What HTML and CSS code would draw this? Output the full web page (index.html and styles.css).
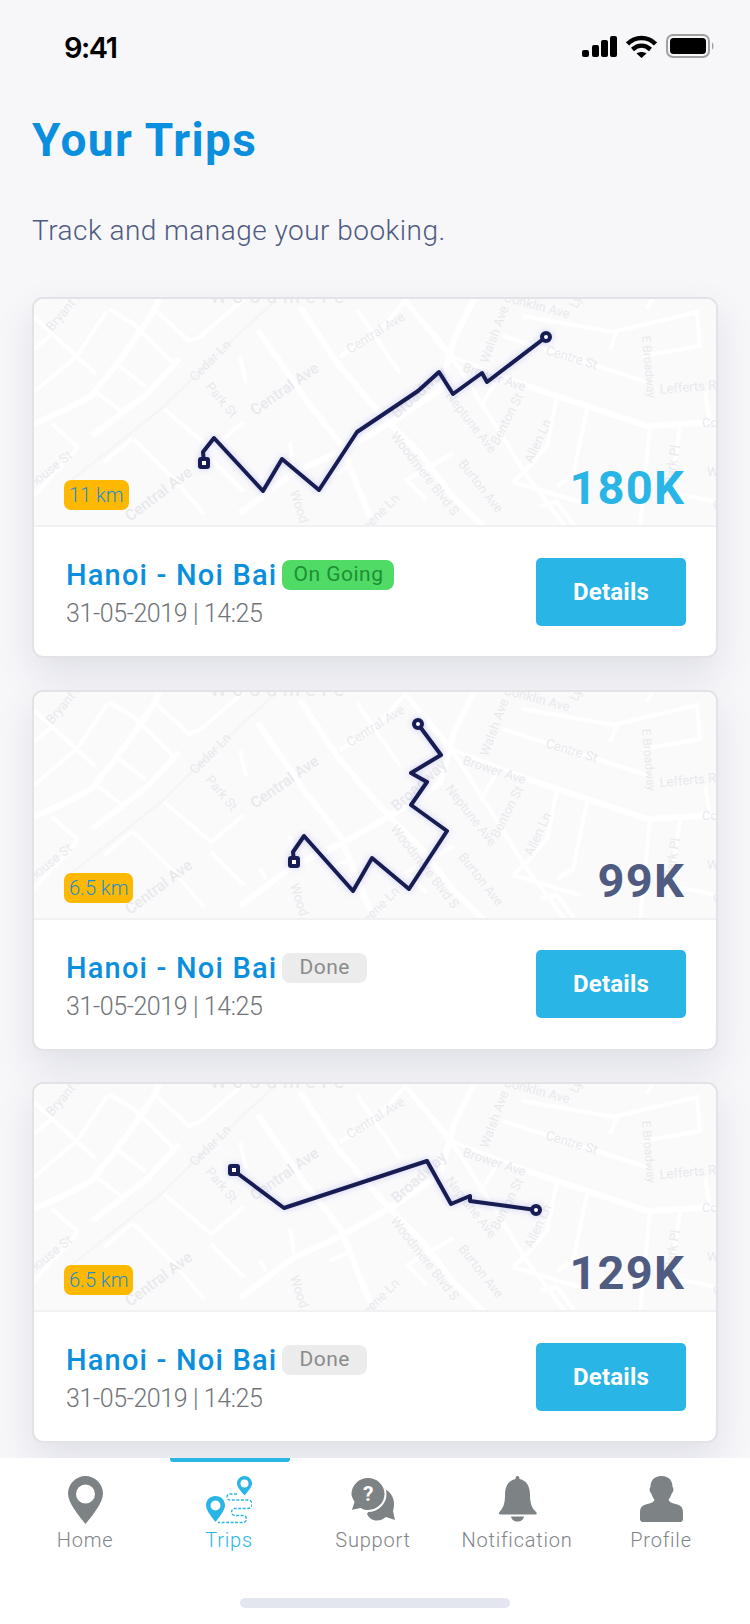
FILE: index.html
```html
<!DOCTYPE html>
<html lang="en">
<head>
  <meta charset="UTF-8">
  <meta name="viewport" content="width=device-width, initial-scale=1.0">
  <title>Your Trips</title>
  <link rel="stylesheet" href="styles.css">
</head>
<body>
  <!-- map drawing shared by the three cards -->
  <svg class="defs" width="0" height="0">
    <symbol id="streets" viewBox="0 0 682 226">
      <g class="road">
        <path d="M0 18L43 58L62 75"/>
        <path d="M18 35L0 50"/>
        <path d="M73 12L43 57L0 93"/>
        <path class="wide" d="M0 125L33 110L57 97L83 65L103 37L120 12L125 0"/>
        <path d="M75 10L100 25L140 65"/>
        <path d="M83 65L112 88"/>
        <path d="M62 93L87 112"/>
        <path class="wide" d="M58 137L113 95L145 60"/>
        <path d="M18 125L43 147L41 152L0 197"/>
        <path d="M98 140L70 163"/>
        <path d="M100 140L140 180L170 215"/>
        <path d="M130 110L177 150L210 123"/>
        <path d="M177 160L210 193"/>
        <path d="M118 8L155 42L167 37L210 0"/>
        <path class="wide" d="M206 214L259 174L309 151L366 118L406 91L420 40L440 0"/>
        <path class="wide" d="M224 31L272 101L306 144L336 218"/>
        <path class="wide" d="M266 8L303 64L343 111L389 158L419 198L473 250"/>
        <path d="M323 11L366 74"/>
        <path d="M306 58L346 31L373 0"/>
        <path d="M370 0L420 58"/>
        <path d="M419 58L506 91"/>
        <path d="M463 81L446 108"/>
        <path d="M419 154L373 181L393 201"/>
        <path d="M256 144L260 170M206 58L212 84M226 177L232 187M296 177L313 169"/>
        <path d="M369 0L426 70L493 177L533 230"/>
        <path class="wide" d="M493 87L613 127L683 123"/>
        <path d="M523 97L513 147L493 170L479 183"/>
        <path d="M553 110L539 177L523 187"/>
        <path d="M616 127L609 197L606 230"/>
        <path d="M646 127L639 177"/>
        <path d="M489 17L579 33L663 13L666 47L609 57"/>
        <path d="M583 33L576 50"/>
        <path d="M469 37L613 83"/>
        <path d="M479 183L546 203M506 207L523 203L543 230M633 193L683 203"/>
        <path d="M618 0L613 10M671 93L676 123"/>
      </g>
      <path class="rail" d="M30 187L127 110L210 30L240 3"/>
      <g class="label">
        <text class="spaced" x="176" y="4">Woodmere</text>
        <text transform="translate(18 33) rotate(-50)">Bryant St</text>
        <text transform="translate(161 83) rotate(-45)">Cedar Ln</text>
        <text transform="translate(171 88) rotate(50)">Park St</text>
        <text class="major" transform="translate(221 117) rotate(-35)">Central Ave</text>
        <text transform="translate(316 55) rotate(-32)">Central Ave</text>
        <text class="major" transform="translate(96 223) rotate(-37)">Central Ave</text>
        <text class="end" transform="translate(39 158) rotate(-38)">Townhouse St</text>
        <text transform="translate(256 193) rotate(72)">Wood Rd</text>
        <text class="major" transform="translate(363 120) rotate(-42)">Broadway</text>
        <text transform="translate(469 2) rotate(15)">Conklin Ave</text>
        <text transform="translate(543 10) rotate(-65)">Ly</text>
        <text transform="translate(454 65) rotate(-70)">Walsh Ave</text>
        <text transform="translate(428 72) rotate(18)">Brower Ave</text>
        <text transform="translate(511 55) rotate(17)">Centre St</text>
        <text class="small" transform="translate(608 37) rotate(85)">E Broadway</text>
        <text transform="translate(626 95) rotate(-5)">Lefferts Rd</text>
        <text transform="translate(668 128)">Cole St</text>
        <text transform="translate(411 97) rotate(52)">Neptune Ave</text>
        <text transform="translate(464 147) rotate(-63)">Benton St</text>
        <text transform="translate(498 165) rotate(-65)">Allen Ln</text>
        <text transform="translate(356 137) rotate(52)">Woodmere Blvd S</text>
        <text transform="translate(424 165) rotate(52)">Burton Ave</text>
        <text class="end" transform="translate(366 200) rotate(-45)">Greene Ln</text>
        <text transform="translate(639 187) rotate(-80)">Park Pl</text>
        <text transform="translate(673 177)">Willow</text>
        <text transform="translate(679 210)">Co</text>
      </g>
    </symbol>
  </svg>

  <div class="screen">
    <header class="status-bar">
      <span class="clock">9:41</span>
      <div class="status-icons">
        <svg width="35" height="21" viewBox="0 0 35 21"><rect x="0" y="14" width="7" height="7" rx="2"/><rect x="10" y="9" width="7" height="12" rx="2"/><rect x="19" y="4" width="7" height="17" rx="2"/><rect x="28" y="0" width="7" height="21" rx="2"/></svg>
        <svg width="31" height="23" viewBox="0 0 31 23"><path class="wifi" d="M1.500 9C9 1 22 1 29.500 9"/><path class="wifi" d="M6.500 14.500C12 9.500 19 9.500 24.500 14.500"/><path d="M10.500 18.500C13.500 16.500 17.500 16.500 20.500 18.500L15.500 23Z"/></svg>
        <svg width="49" height="24" viewBox="0 0 49 24"><rect class="battery-case" x="1" y="1" width="42" height="22" rx="6"/><rect x="4" y="4" width="36" height="16" rx="3.500"/><path class="battery-tip" d="M46 8.500C48 9.500 48 14.500 46 15.500Z"/></svg>
      </div>
    </header>

    <main class="content">
      <h1 class="page-title">Your Trips</h1>
      <p class="page-sub">Track and manage your booking.</p>

      <article class="trip-card">
        <div class="map">
          <svg class="map-art"><use href="#streets"/></svg>
          <svg class="route" viewBox="0 0 682 226">
            <path class="route-line" d="M170 164L169 153L180 139L229 192L248 160L285 191L323 133L384 92L405 73L419 95L448 74L453 83L512 38"/>
            <rect class="route-dot" x="166" y="160" width="8" height="8" rx="1"/>
            <circle class="route-dot" cx="512" cy="38" r="4"/>
          </svg>
          <div class="map-foot">
            <span class="distance">11 km</span>
            <span class="price price-live">180K</span>
          </div>
        </div>
        <div class="trip-info">
          <div class="trip-text">
            <div class="trip-head">
              <h2 class="trip-name">Hanoi - Noi Bai</h2>
              <span class="tag tag-live">On Going</span>
            </div>
            <p class="trip-date">31-05-2019 | 14:25</p>
          </div>
          <a class="details-btn" href="#">Details</a>
        </div>
      </article>

      <article class="trip-card">
        <div class="map">
          <svg class="map-art"><use href="#streets"/></svg>
          <svg class="route" viewBox="0 0 682 226">
            <path class="route-line" d="M260 170L259 160L270 144L319 199L338 166L375 197L413 139L377 113L393 90L377 81L407 63L384 32"/>
            <rect class="route-dot" x="256" y="166" width="8" height="8" rx="1"/>
            <circle class="route-dot" cx="384" cy="32" r="4"/>
          </svg>
          <div class="map-foot">
            <span class="distance">6.5 km</span>
            <span class="price">99K</span>
          </div>
        </div>
        <div class="trip-info">
          <div class="trip-text">
            <div class="trip-head">
              <h2 class="trip-name">Hanoi - Noi Bai</h2>
              <span class="tag">Done</span>
            </div>
            <p class="trip-date">31-05-2019 | 14:25</p>
          </div>
          <a class="details-btn" href="#">Details</a>
        </div>
      </article>

      <article class="trip-card">
        <div class="map">
          <svg class="map-art"><use href="#streets"/></svg>
          <svg class="route" viewBox="0 0 682 226">
            <path class="route-line" d="M199 86L250 124L393 77L417 120L436 112L436 117L502 126"/>
            <rect class="route-dot" x="196" y="82" width="8" height="8" rx="1"/>
            <circle class="route-dot" cx="502" cy="126" r="4"/>
          </svg>
          <div class="map-foot">
            <span class="distance">6.5 km</span>
            <span class="price">129K</span>
          </div>
        </div>
        <div class="trip-info">
          <div class="trip-text">
            <div class="trip-head">
              <h2 class="trip-name">Hanoi - Noi Bai</h2>
              <span class="tag">Done</span>
            </div>
            <p class="trip-date">31-05-2019 | 14:25</p>
          </div>
          <a class="details-btn" href="#">Details</a>
        </div>
      </article>
    </main>

    <nav class="tab-bar">
      <div class="tabs">
        <a class="tab" href="#">
          <svg width="35" height="48" viewBox="0 0 35 48"><path fill-rule="evenodd" d="M17.500 0C27 0 35 8 35 17.500C35 27 24 40 17.500 48C11 40 0 27 0 17.500C0 8 8 0 17.500 0ZM17.500 8.500a9.500 9.500 0 1 0 0 19a9.500 9.500 0 1 0 0-19Z"/></svg>
          <span>Home</span>
        </a>
        <a class="tab tab-active" href="#">
          <svg width="46" height="48" viewBox="0 0 46 48">
            <path fill-rule="evenodd" d="M38.500 0C42.500 0 46 3.200 46 7.500C46 11 41.500 16 38.500 19.500C35.500 16 31 11 31 7.500C31 3.200 34.500 0 38.500 0ZM38.500 3.500a4 4 0 1 0 0 8a4 4 0 1 0 0-8Z"/>
            <path fill-rule="evenodd" d="M9.500 20C15 20 19 24 19 29.500C19 34 13.500 41 9.500 46C5.500 41 0 34 0 29.500C0 24 4 20 9.500 20ZM9.500 24.500a5 5 0 1 0 0 10a5 5 0 1 0 0-10Z"/>
            <path class="dash" d="M31 18H24a3 3 0 0 0 0 6H42a4 4 0 0 1 0 8.500H29a3.500 3.500 0 0 0 0 7H37a3.500 3.500 0 0 1 0 7H12"/>
          </svg>
          <span>Trips</span>
        </a>
        <a class="tab" href="#">
          <svg width="44" height="48" viewBox="0 0 44 48">
            <path d="M31 12C38 14 43 20 43 28C43 31 42.500 33 42 35L44 44L35 41C32 43.500 29 44.500 26 44.500C21 44.500 18 42 16 38Z"/>
            <path class="bubble" d="M17 1C26.500 1 34.500 8.500 34.500 18C34.500 27.500 26.500 35 17 35C14 35 11 34 9.500 33L-.5 35L2.500 26C1 23.500 -.5 21 -.5 18C-.5 8.500 7.500 1 17 1Z"/>
            <text class="help" x="17.500" y="25">?</text>
          </svg>
          <span>Support</span>
        </a>
        <a class="tab" href="#">
          <svg width="39" height="48" viewBox="0 0 39 48">
            <path d="M19.500 0C20.800 0 21.500 1 21.500 3C29 4.500 32 11 32 19C32 28 34 32 38 36C39.500 37.600 38.500 38.500 37 38.500H2.500C1 38.500 0 37.500 1.500 36C5 32 7 28 7 19C7 11 10 4.500 17.500 3C17.500 1 18.200 0 19.500 0Z"/>
            <path d="M13 40.500H26C25.500 43.500 23 45.500 19.500 45.500C16 45.500 13.500 43.500 13 40.500Z"/>
          </svg>
          <span>Notification</span>
        </a>
        <a class="tab" href="#">
          <svg width="43" height="48" viewBox="0 0 43 48"><path d="M21.500 0C29.500 0 32.500 5 32.500 11C34 12 33.500 16 32 17C31 20 29.500 22 28.500 24C29.500 26 31.500 27 35.500 28C40.500 29 43 31.500 43 36V43C43 44.500 42 46 40.500 46H2.500C1 46 0 44.500 0 43V36C0 31.500 2.500 29 7.500 28C11.500 27 13.500 26 14.500 24C13.500 22 12 20 11 17C9.500 16 9 12 10.500 11C10.500 5 13.500 0 21.500 0Z"/></svg>
          <span>Profile</span>
        </a>
      </div>
      <div class="home-bar"></div>
    </nav>
  </div>
</body>
</html>
```

FILE: styles.css
```css
* {
  margin: 0;
  padding: 0;
  box-sizing: border-box;
}

body {
  font-family: 'Roboto', sans-serif;
  background: #f7f7fa;
  width: 750px;
  height: 1624px;
  overflow: hidden;
}

.defs {
  position: absolute;
}

.screen {
  height: 1624px;
  display: flex;
  flex-direction: column;
}

/* status bar */
.status-bar {
  height: 96px;
  padding: 32px 35px 0 64px;
  display: flex;
  justify-content: space-between;
  align-items: flex-start;
  flex-shrink: 0;
}

.clock {
  font-family: 'Inter', sans-serif;
  font-size: 29px;
  font-weight: 600;
  line-height: 32px;
  letter-spacing: -1.5px;
  color: #000;
}

.status-icons {
  display: flex;
  align-items: center;
  gap: 9px;
  padding-top: 2px;
}

.wifi {
  fill: none;
  stroke: #000;
  stroke-width: 4.500;
}

.battery-case {
  fill: none;
  stroke: #a0a0a0;
  stroke-width: 2;
}

.battery-tip {
  fill: #a0a0a0;
}

/* heading */
.content {
  flex: 1;
  padding: 0 32px;
  overflow: hidden;
}

.page-title {
  font-size: 46px;
  font-weight: 700;
  line-height: 54px;
  letter-spacing: 1.400px;
  color: #0a8fdf;
  margin-top: 17px;
}

.page-sub {
  font-size: 28px;
  font-weight: 300;
  line-height: 34px;
  letter-spacing: .47px;
  color: #4f5b80;
  margin-top: 47px;
  margin-bottom: 49px;
}

/* cards */
.trip-card {
  height: 361px;
  margin-bottom: 31.500px;
  background: #fff;
  border: 2px solid #e3e3e7;
  border-radius: 11px;
  box-shadow: 0 16px 36px rgba(70, 75, 110, .13);
  overflow: hidden;
}

.map {
  position: relative;
  height: 228px;
  background: #fafafb;
  border-bottom: 2px solid #f1f1f3;
}

.map-art,
.route {
  position: absolute;
  left: 0;
  top: 0;
  width: 682px;
  height: 226px;
}

.road path {
  fill: none;
  stroke: #fff;
  stroke-width: 4;
}

.road .wide {
  stroke-width: 6;
}

.rail {
  fill: none;
  stroke: #f5f5f7;
  stroke-width: 2.500;
}

.label text {
  font-family: 'Roboto', sans-serif;
  font-size: 13px;
  fill: #e9e9ed;
}

.label .major {
  font-size: 15.500px;
  font-weight: 500;
}

.label .small {
  font-size: 12px;
}

.label .end {
  text-anchor: end;
}

.label .spaced {
  font-size: 19px;
  letter-spacing: 6px;
}

.route {
  filter: drop-shadow(0 0 3px rgba(80, 85, 210, .3));
}

.route-line {
  fill: none;
  stroke: #171c52;
  stroke-width: 4;
  stroke-linejoin: round;
}

.route-dot {
  fill: #fff;
  stroke: #171c52;
  stroke-width: 4;
}

.map-foot {
  position: absolute;
  left: 30px;
  right: 31px;
  bottom: 15px;
  display: flex;
  justify-content: space-between;
  align-items: flex-end;
}

.distance {
  height: 30px;
  padding: 0 5px;
  min-width: 64px;
  border-radius: 7px;
  background: #ffb800;
  color: #1a8fd6;
  font-size: 20px;
  font-weight: 300;
  line-height: 30px;
  text-align: center;
}

.price {
  font-size: 47px;
  font-weight: 700;
  line-height: 44px;
  color: #4f5b80;
  letter-spacing: 1.200px;
}

.price-live {
  color: #29b5e6;
}

.trip-info {
  height: 129px;
  padding: 0 30px 0 32px;
  display: flex;
  justify-content: space-between;
  align-items: center;
}

.trip-text {
  padding-top: 4px;
}

.trip-head {
  display: flex;
  align-items: center;
  gap: 5px;
}

.trip-name {
  font-size: 29px;
  font-weight: 500;
  line-height: 34px;
  letter-spacing: 1.200px;
  color: #0a8fdf;
}

.tag {
  height: 30px;
  padding: 0 17px;
  border-radius: 8px;
  background: #ececec;
  color: #8b8b8b;
  font-size: 21px;
  line-height: 29px;
  letter-spacing: .5px;
}

.tag-live {
  padding: 0 11px;
  background: #4fdb66;
  color: #1d8f33;
}

.trip-date {
  font-size: 25px;
  font-weight: 300;
  line-height: 30px;
  letter-spacing: -.4px;
  color: #6f7477;
  margin-top: 7px;
}

.details-btn {
  width: 150px;
  height: 68px;
  border-radius: 5px;
  background: #29b5e6;
  color: #fff;
  font-size: 24px;
  font-weight: 700;
  line-height: 68px;
  letter-spacing: .2px;
  text-align: center;
  text-decoration: none;
}

/* bottom tabs */
.tab-bar {
  height: 166px;
  flex-shrink: 0;
  background: #fff;
  padding: 0 17px 0 13px;
  display: flex;
  flex-direction: column;
  align-items: stretch;
}

.tabs {
  display: grid;
  grid-template-columns: repeat(5, 144px);
}

.tab {
  height: 140px;
  padding-top: 18px;
  display: flex;
  flex-direction: column;
  align-items: center;
  color: #808487;
  fill: #7d8285;
  font-size: 20px;
  font-weight: 300;
  letter-spacing: .8px;
  line-height: 24px;
  text-decoration: none;
  position: relative;
}

.tab span {
  margin-top: 4px;
}

.tab-active {
  color: #29b5e6;
  fill: #29b5e6;
}

.tab-active::before {
  content: "";
  position: absolute;
  top: 0;
  left: 13px;
  right: 11px;
  height: 4px;
  border-radius: 0 0 3px 3px;
  background: #29b5e6;
}

.dash {
  fill: none;
  stroke: #29b5e6;
  stroke-width: 1.400;
  stroke-dasharray: 3 1.500;
}

.bubble {
  stroke: #fff;
  stroke-width: 2;
}

.help {
  font-family: 'Roboto', sans-serif;
  font-size: 21px;
  font-weight: 700;
  fill: #fff;
  text-anchor: middle;
}

.home-bar {
  width: 270px;
  height: 10px;
  border-radius: 5px;
  background: #e3e6ee;
  align-self: center;
  margin-left: 3px;
}
```
